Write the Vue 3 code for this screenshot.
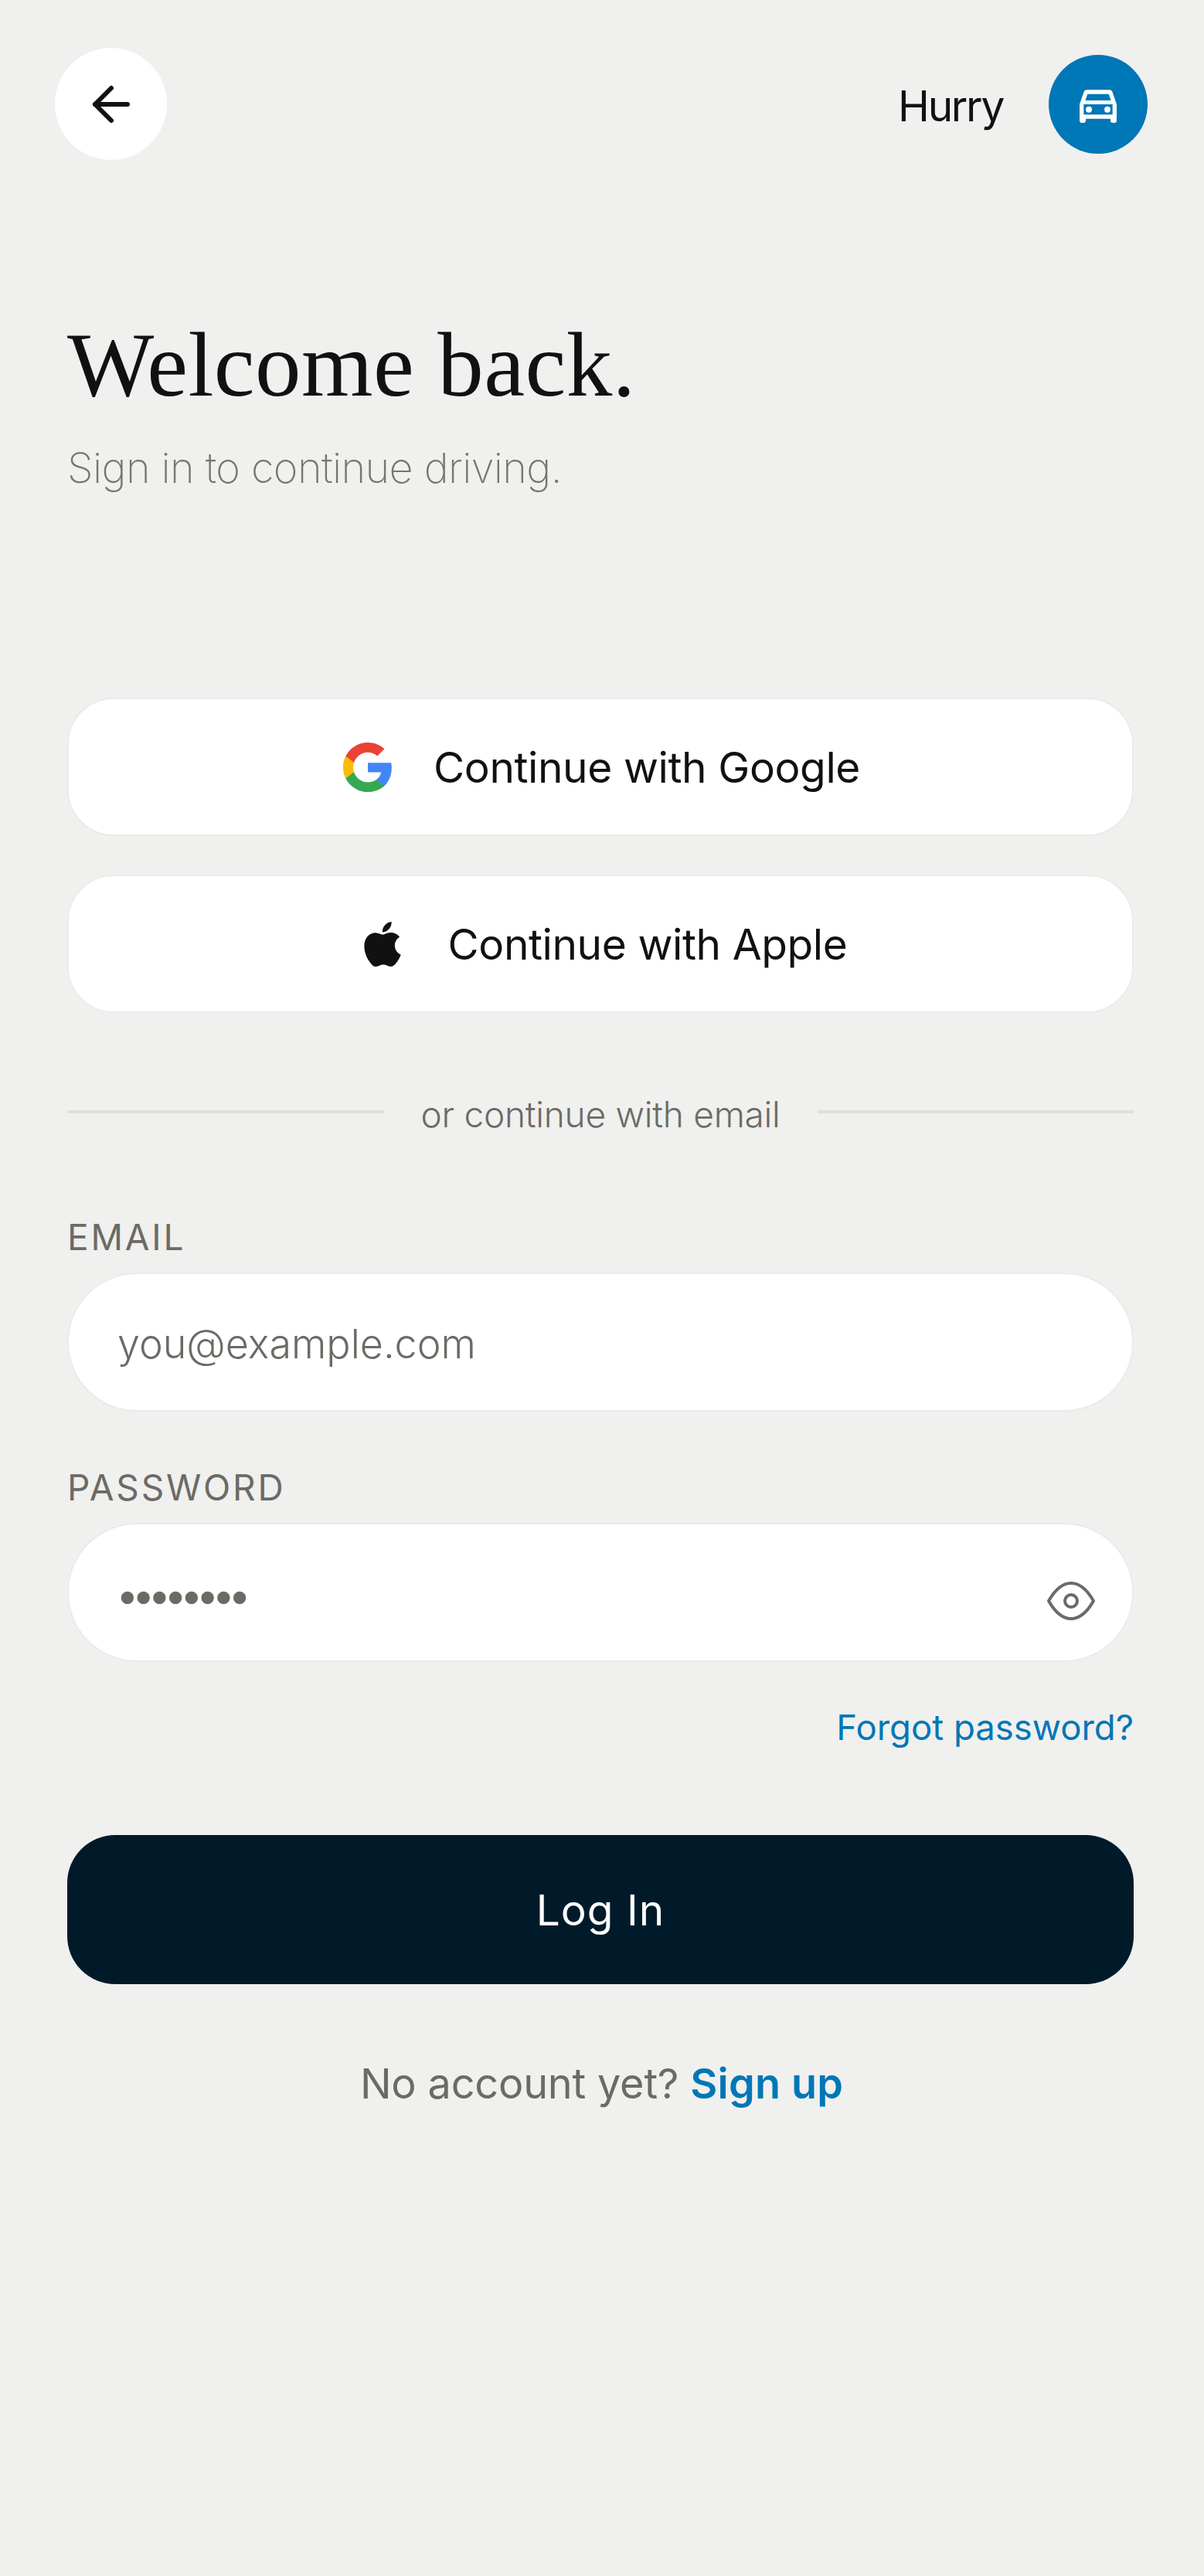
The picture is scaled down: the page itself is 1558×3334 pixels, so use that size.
<template>
  <div class="page">
    <header class="topbar">
      <button class="back-btn" aria-label="Back">
        <svg width="72" height="72" viewBox="0 0 24 24" fill="none" stroke="#111" stroke-width="2" stroke-linecap="round" stroke-linejoin="round">
          <path d="m12 19-7-7 7-7" />
          <path d="M19 12H5" />
        </svg>
      </button>
      <div class="brand">
        <span class="brand-name">Hurry</span>
        <span class="brand-badge">
          <svg width="64" height="64" viewBox="0 0 24 24" fill="#fff">
            <path d="M18.92 6.01C18.72 5.42 18.16 5 17.5 5h-11c-.66 0-1.21.42-1.42 1.01L3 12v8c0 .55.45 1 1 1h1c.55 0 1-.45 1-1v-1h12v1c0 .55.45 1 1 1h1c.55 0 1-.45 1-1v-8l-2.08-5.99zM6.85 7h10.29l1.08 3.11H5.77L6.85 7zM19 17H5v-5h14v5z" />
            <circle cx="7.5" cy="14.5" r="1.5" />
            <circle cx="16.5" cy="14.5" r="1.5" />
          </svg>
        </span>
      </div>
    </header>

    <main class="content">
      <h1 class="title">Welcome back.</h1>
      <p class="subtitle">Sign in to continue driving.</p>

      <div class="social">
        <button class="social-btn google">
          <svg width="70" height="70" viewBox="0 0 24 24">
            <path fill="#4285F4" d="M22.56 12.25c0-.78-.07-1.53-.2-2.25H12v4.26h5.92c-.26 1.37-1.04 2.53-2.21 3.31v2.77h3.57c2.08-1.92 3.28-4.74 3.28-8.09z" />
            <path fill="#34A853" d="M12 23c2.97 0 5.46-.98 7.28-2.66l-3.57-2.77c-.98.66-2.23 1.06-3.71 1.06-2.86 0-5.29-1.93-6.16-4.53H2.18v2.84C3.99 20.53 7.7 23 12 23z" />
            <path fill="#FBBC05" d="M5.84 14.09c-.22-.66-.35-1.36-.35-2.09s.13-1.43.35-2.09V7.07H2.18C1.43 8.55 1 10.22 1 12s.43 3.45 1.18 4.93l2.85-2.22.81-.62z" />
            <path fill="#EA4335" d="M12 5.38c1.62 0 3.06.56 4.21 1.64l3.15-3.15C17.45 2.09 14.97 1 12 1 7.7 1 3.99 3.47 2.18 7.07l3.66 2.84c.87-2.6 3.3-4.53 6.16-4.53z" />
          </svg>
          <span>Continue with Google</span>
        </button>
        <button class="social-btn apple">
          <svg width="58" height="58" viewBox="0 0 24 24" fill="#111">
            <path d="M12.152 6.896c-.948 0-2.415-1.078-3.96-1.04-2.04.027-3.91 1.183-4.961 3.014-2.117 3.675-.546 9.103 1.519 12.09 1.013 1.454 2.208 3.09 3.792 3.039 1.52-.065 2.09-.987 3.935-.987 1.831 0 2.35.987 3.96.948 1.637-.026 2.676-1.48 3.676-2.948 1.156-1.688 1.636-3.325 1.662-3.415-.039-.013-3.182-1.221-3.22-4.857-.026-3.04 2.48-4.494 2.597-4.559-1.429-2.09-3.623-2.324-4.39-2.376-2-.156-3.675 1.09-4.61 1.09zM15.53 3.83c.843-1.012 1.4-2.427 1.245-3.83-1.207.052-2.662.805-3.532 1.818-.78.896-1.454 2.338-1.273 3.714 1.338.104 2.715-.688 3.559-1.701" />
          </svg>
          <span>Continue with Apple</span>
        </button>
      </div>

      <div class="divider">
        <span class="divider-line"></span>
        <span class="divider-text">or continue with email</span>
        <span class="divider-line"></span>
      </div>

      <form class="form" @submit.prevent>
        <label class="label" for="email">EMAIL</label>
        <input id="email" class="input" type="email" placeholder="you@example.com" />

        <label class="label label-password" for="password">PASSWORD</label>
        <div class="password-wrap">
          <input id="password" class="input input-password" type="password" value="password" />
          <button type="button" class="eye-btn" aria-label="Show password">
            <svg width="64" height="52" viewBox="0 0 64 52" fill="none" stroke="#6b6b66" stroke-width="4" stroke-linejoin="round">
              <path d="M3 26C11 12 21 3 32 3s21 9 29 23C53 40 43 49 32 49S11 40 3 26z" />
              <circle cx="32" cy="26" r="8" />
            </svg>
          </button>
        </div>

        <a class="forgot" href="#">Forgot password?</a>

        <button class="submit" type="submit">Log In</button>
      </form>

      <p class="signup">No account yet? <a href="#">Sign up</a></p>
    </main>
  </div>
</template>

<script setup>
</script>

<style>
html,
body {
  margin: 0;
  background: #f0f0ee;
}
</style>

<style scoped>
.page {
  min-height: 3334px;
  background: #f0f0ee;
  font-family: Inter, "Liberation Sans", sans-serif;
  color: #111;
  box-sizing: border-box;
}

.topbar {
  display: flex;
  justify-content: space-between;
  align-items: center;
  padding: 62px 73px 0 71px;
}

.back-btn {
  width: 145px;
  height: 145px;
  border: none;
  border-radius: 50%;
  background: #fff;
  display: flex;
  align-items: center;
  justify-content: center;
  padding: 0;
}

.brand {
  display: flex;
  align-items: center;
  gap: 59px;
}

.brand-name {
  font-size: 55px;
  letter-spacing: -2.3px;
  padding-top: 4px;
}

.brand-badge {
  width: 128px;
  height: 128px;
  border-radius: 50%;
  background: #0077b6;
  display: flex;
  align-items: center;
  justify-content: center;
}

.content {
  padding: 0 91px 0 87px;
}

.title {
  margin: 200px 0 0;
  font-family: "Liberation Serif", serif;
  font-weight: 400;
  font-size: 119px;
  line-height: 130px;
  letter-spacing: 0.4px;
  color: #111;
}

.subtitle {
  margin: 34px 0 0;
  font-weight: 200;
  font-size: 54px;
  line-height: 70px;
  letter-spacing: -0.6px;
  color: #767671;
}

.social {
  margin-top: 262px;
  display: flex;
  flex-direction: column;
  gap: 50px;
}

.social-btn {
  height: 179px;
  border: 2px solid #ebebe9;
  border-radius: 60px;
  background: #fff;
  display: flex;
  align-items: center;
  justify-content: center;
  font-family: inherit;
  font-size: 55px;
  letter-spacing: -0.4px;
  color: #111;
  padding: 0;
}

.google {
  gap: 50px;
}

.apple {
  gap: 56px;
  padding-left: 8px;
}

.divider {
  margin-top: 98px;
  display: flex;
  align-items: center;
  gap: 48px;
  height: 60px;
}

.divider-line {
  flex: 1;
  height: 4px;
  background: #dfdfdd;
}

.divider-text {
  font-size: 46px;
  font-weight: 300;
  letter-spacing: -0.25px;
  padding-top: 6px;
  color: #6b6b66;
}

.form {
  display: flex;
  flex-direction: column;
}

.label {
  margin-top: 102px;
  margin-bottom: 16px;
  font-size: 46px;
  line-height: 60px;
  letter-spacing: 2.8px;
  color: #6b6b66;
}

.label-password {
  margin-top: 68px;
}

.input {
  display: block;
  width: 100%;
  height: 180px;
  box-sizing: border-box;
  border: 2px solid #ebebe9;
  border-radius: 90px;
  background: #fff;
  padding: 4px 63px 0;
  font-family: inherit;
  font-size: 52px;
  font-weight: 350;
  letter-spacing: 0;
  color: #6b6b66;
  outline: none;
}

.input::placeholder {
  color: #6b6b66;
  opacity: 1;
}

.input-password {
  font-size: 60px;
  letter-spacing: -13px;
  padding: 3px 63px 0 59px;
}

.password-wrap {
  position: relative;
}

.eye-btn {
  position: absolute;
  right: 49px;
  top: 75px;
  border: none;
  background: none;
  padding: 0;
  display: flex;
}

.forgot {
  align-self: flex-end;
  margin-top: 55px;
  font-size: 45.5px;
  line-height: 60px;
  color: #0077b6;
  text-decoration: none;
}

.submit {
  margin-top: 109px;
  height: 193px;
  border: none;
  border-radius: 62px;
  background: #011a2a;
  color: #fff;
  font-family: inherit;
  font-size: 55px;
  letter-spacing: 1px;
  padding: 0;
}

.signup {
  margin: 94px 0 0;
  text-align: center;
  font-size: 54px;
  line-height: 70px;
  letter-spacing: -0.2px;
  color: #6b6b66;
  padding-left: 3px;
}

.signup a {
  color: #0077b6;
  font-weight: 600;
  letter-spacing: 0.2px;
  text-decoration: none;
}
</style>
